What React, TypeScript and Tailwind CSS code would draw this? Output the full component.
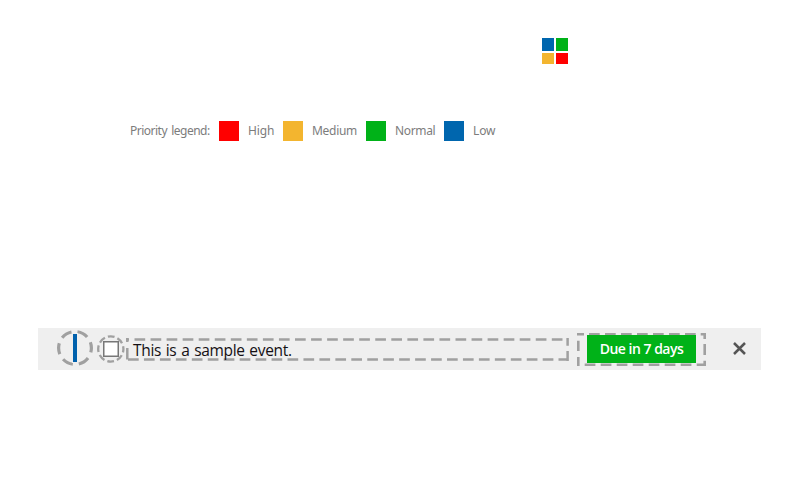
import React from "react";

const legend = [
  { label: "High", color: "bg-[#ff0000]", cell: "w-[64px]", text: "tracking-[-0.1px]" },
  { label: "Medium", color: "bg-[#f3b52f]", cell: "w-[83px]", text: "tracking-[-0.3px]" },
  { label: "Normal", color: "bg-[#00b218]", cell: "w-[78px]", text: "tracking-[-0.35px]" },
  { label: "Low", color: "bg-[#0066ae]", cell: "w-[60px]", text: "tracking-[-0.15px]" },
];

function PriorityIcon() {
  return (
    <div className="ml-[542px] grid w-[26px] grid-cols-2 gap-[2px]">
      <div className="h-[13px] bg-[#0066ae]" />
      <div className="h-[13px] bg-[#00b218]" />
      <div className="h-[11px] bg-[#f3b52f]" />
      <div className="h-[11px] bg-[#ff0000]" />
    </div>
  );
}

function EventFrame() {
  return (
    <svg className="absolute inset-0" width="443" height="23" fill="none" stroke="#a0a0a0" strokeWidth="2.5">
      <path d="M0 1.4H3M1.3 0V4M1.3 10V21.5" />
      <path d="M8.5 1.4H437" strokeDasharray="10.7 5.35" />
      <path d="M441.6 0V7.7M441.6 13V23M432.5 21.5H442" />
      <path d="M2 21.5H431" strokeDasharray="10.7 5.25" />
    </svg>
  );
}

function DueFrame() {
  return (
    <svg className="absolute inset-0" width="129" height="33" fill="none" stroke="#a0a0a0" strokeWidth="2.6">
      <path d="M0 1.3H7M1.3 0V2.6M1.3 7.8V18M1.3 24V33" />
      <path d="M12 1.3H119" strokeDasharray="10.7 5.3" />
      <path d="M123.7 1.3H129M127.7 0V6M127.7 11V22M127.7 27.7V33M119.7 31.7H129" />
      <path d="M7.7 31.7H114.5" strokeDasharray="10.7 5.3" />
    </svg>
  );
}

export default function App() {
  return (
    <main className="h-[500px] w-[800px] overflow-hidden bg-white pt-[38px] font-['Noto_Sans','Open_Sans',sans-serif]">
      <PriorityIcon />
      <div className="mt-[57px] ml-[130px] flex h-5 items-center text-[12px] leading-5 text-[#7c7c7c]">
        <span className="w-[89px] whitespace-nowrap tracking-[-0.5px] [word-spacing:1.5px]">Priority legend:</span>
        {legend.map((l) => (
          <div key={l.label} className={`flex shrink-0 items-center gap-[9px] ${l.cell}`}>
            <span className={`size-5 shrink-0 ${l.color}`} />
            <span className={l.text}>{l.label}</span>
          </div>
        ))}
      </div>
      <div className="mt-[187px] ml-[38px] flex h-[42px] w-[723px] items-start bg-[#efefef]">
        <svg className="mt-[2px] ml-[18px] shrink-0" width="38" height="37" fill="none">
          <circle cx="19" cy="18" r="16.4" stroke="#a0a0a0" strokeWidth="3.2" strokeDasharray="11 6.17" strokeDashoffset="6.5" />
          <rect x="16" y="3" width="6" height="30" fill="#efefef" />
          <rect x="17" y="4" width="4" height="28" fill="#0061ad" />
        </svg>
        <svg className="mt-[7px] ml-[3px] shrink-0" width="28" height="28" fill="none">
          <circle cx="13.8" cy="14" r="12.6" stroke="#a0a0a0" strokeWidth="2.3" strokeDasharray="6.8 3.1" strokeDashoffset="3.4" />
          <rect x="6.75" y="6.75" width="14.5" height="14.5" fill="white" stroke="#777" strokeWidth="1.5" />
        </svg>
        <div className="relative mt-[10px] ml-[1px] h-[23px] w-[443px] shrink-0">
          <EventFrame />
          <span className="relative block pl-[7px] font-['Open_Sans','Noto_Sans',sans-serif] text-[15.5px] leading-[24px] tracking-[-0.32px] [word-spacing:1px] text-[#141014]">This is a sample event.</span>
        </div>
        <div className="relative mt-[5px] ml-[8px] h-[33px] w-[129px] shrink-0">
          <DueFrame />
          <div className="relative mt-[2px] ml-[10px] h-[28px] w-[109px] bg-[#00b218] text-center font-['Open_Sans','Noto_Sans',sans-serif] text-[14px] leading-[27px] font-semibold text-white">
            <span className="tracking-[-0.5px]">Due in 7 days</span>
          </div>
        </div>
        <svg className="mt-[14px] ml-[27px] shrink-0" width="13" height="13" fill="none" stroke="#555" strokeWidth="2.5">
          <path d="M1 1L12 12M12 1L1 12" />
        </svg>
      </div>
    </main>
  );
}
